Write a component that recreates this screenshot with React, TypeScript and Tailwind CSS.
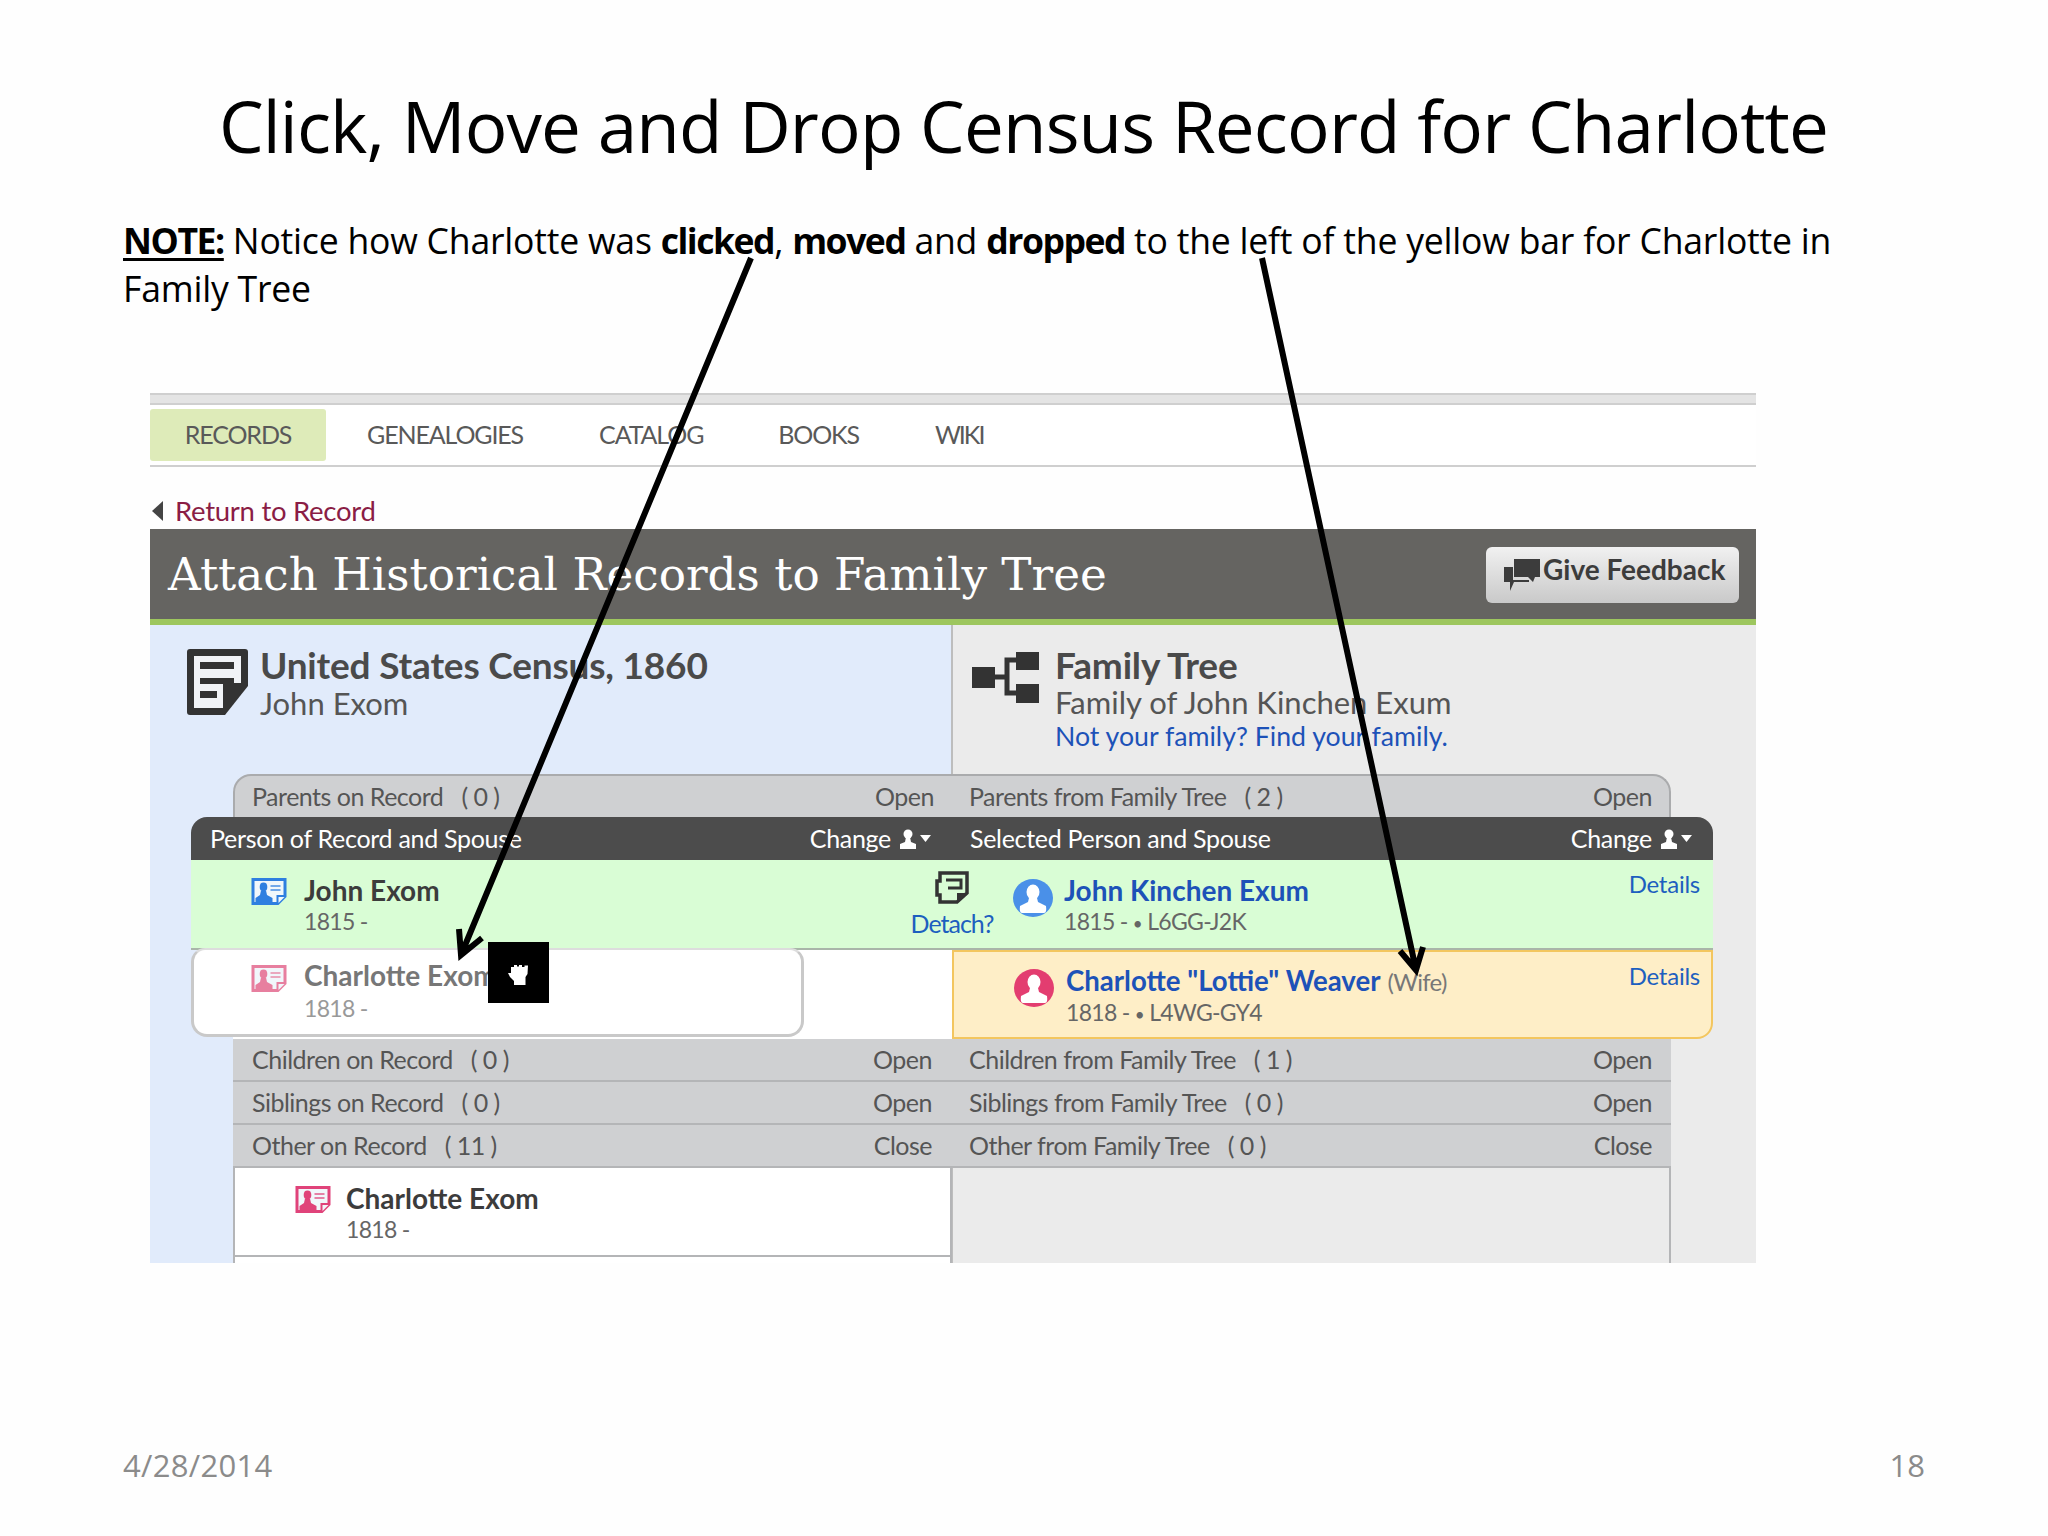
import React from "react";

const ui = "font-['Lato','Liberation_Sans',sans-serif]";

// small card icon next to a record name
const CardIcon = ({ color, className = "" }: { color: string; className?: string }) => (
  <svg viewBox="0 0 35 27" className={`w-[36px] h-[27px] shrink-0 ${className}`}>
    <path d="M0 0H35V19L27 27H0Z" fill={color} />
    <path d="M3 3H32V17H25V24H3Z" fill="#f1f7fb" />
    <path d="M27 19H33L27 25Z" fill="#f1f7fb" />
    <ellipse cx="12" cy="9" rx="3.8" ry="4.4" fill={color} />
    <path d="M9.5 12.5H14.5L15.5 17L21 20V24H4V20L8.5 17Z" fill={color} />
    <path d="M19 8H29M19 12H29" stroke={color} strokeWidth="2" opacity="0.65" />
  </svg>
);

// round person icon on the family tree side
const PersonIcon = ({ color }: { color: string }) => (
  <svg viewBox="0 0 40 38" className="w-[40px] h-[38px] shrink-0">
    <ellipse cx="20" cy="19" rx="20" ry="19" fill={color} />
    <ellipse cx="20" cy="13" rx="6.5" ry="7.5" fill="#fff" />
    <path d="M16 19H24L25 23L33 27Q34 34 31 34H9Q6 34 7 27L15 23Z" fill="#fff" />
  </svg>
);

const SmallPerson = () => (
  <svg viewBox="0 0 33 20" className="w-[33px] h-[20px] shrink-0">
    <circle cx="9" cy="5" r="4.5" fill="#fff" />
    <path d="M7 8H11L12 13L17 15V20H1V15L6 13Z" fill="#fff" />
    <path d="M21 6H32L26.5 13Z" fill="#fff" />
  </svg>
);

const Row = ({
  left,
  leftCount,
  right,
  rightCount,
  action,
  first,
}: {
  left: string;
  leftCount: string;
  right: string;
  rightCount: string;
  action: string;
  first?: boolean;
}) => (
  <div
    className={`ml-[83px] w-[1438px] h-[43px] flex items-center bg-[#cfd0d2] text-[#555] text-[25px] tracking-[-0.02em] ${
      first ? "rounded-t-[18px] border-t-2 border-x-2 border-[#aaabad]" : "border-b-2 border-[#b4b5b7]"
    }`}
  >
    <div className={`w-[719px] ${first ? "pl-[17px]" : "pl-[19px]"} pr-[20px] flex justify-between`}>
      <span>
        {left}
        <span className="ml-[18px] tracking-[-0.02em]">{leftCount}</span>
      </span>
      <span>{action}</span>
    </div>
    <div className={`flex-1 ${first ? "pl-[15px]" : "pl-[17px]"} ${first ? "pr-[17px]" : "pr-[19px]"} flex justify-between`}>
      <span>
        {right}
        <span className="ml-[18px] tracking-[-0.02em]">{rightCount}</span>
      </span>
      <span>{action}</span>
    </div>
  </div>
);

const App = () => {
  return (
    <div className="relative w-[2048px] h-[1536px] bg-[#fefefe] overflow-hidden font-['Open_Sans',sans-serif] text-black">
      <h1 className="absolute left-0 top-[82px] w-[2047px] text-center text-[71px] leading-[88px] tracking-[-0.012em]">
        Click, Move and Drop Census Record for Charlotte
      </h1>

      <div className="pt-[216px] pl-[123px] w-[1880px] text-[35.6px] leading-[48px] tracking-[-0.006em] whitespace-nowrap">
        <span className="font-bold tracking-[-0.04em] underline underline-offset-[4px]">NOTE:</span> Notice how Charlotte was{" "}
        <b className="tracking-[-0.042em]">clicked</b>, <b className="tracking-[-0.042em]">moved</b> and{" "}
        <b className="tracking-[-0.042em]">dropped</b> to the left of the yellow bar for Charlotte in
        <br />
        Family Tree
      </div>

      <div className={`mt-[81px] ml-[150px] w-[1606px] ${ui}`}>
        <div className="h-[12px] bg-[#e4e4e4] border-y-2 border-[#cfcfcf]" />
        <nav className="h-[62px] pt-[4px] border-b-2 border-[#cfcfcf] bg-white flex items-start text-[25px] tracking-[-0.045em] text-[#595959]">
          <span className="w-[176px] h-[52px] flex items-center justify-center rounded-[3px] bg-[#deebb9]">RECORDS</span>
          <span className="ml-[41px] h-[52px] flex items-center">GENEALOGIES</span>
          <span className="ml-[76px] h-[52px] flex items-center">CATALOG</span>
          <span className="ml-[75px] h-[52px] flex items-center">BOOKS</span>
          <span className="ml-[76px] h-[52px] flex items-center tracking-[-0.08em]">WIKI</span>
        </nav>
        <div className="h-[62px] pt-[26px] flex items-center text-[27.5px] text-[#8a1d45] tracking-[-0.01em]">
          <svg viewBox="0 0 11 20" className="ml-[2px] w-[11px] h-[20px] mr-[12px]">
            <path d="M11 0V20L0 10Z" fill="#444" />
          </svg>
          Return to Record
        </div>

        <header className="h-[96px] bg-[#656461] border-b-[6px] border-[#9dc65e] flex items-center justify-between pl-[18px] pr-[17px]">
          <span className="font-['DejaVu_Serif',serif] text-[45.3px] text-white pt-[2px]">
            Attach Historical Records to Family Tree
          </span>
          <button className="mt-[2px] w-[253px] h-[56px] rounded-[6px] bg-gradient-to-b from-[#f1f1f1] to-[#c9c9c9] flex items-start pl-[18px] pt-[4px] text-[28px] leading-[36px] font-bold text-[#3c3c3c] whitespace-nowrap">
            <svg viewBox="0 0 36 33" className="w-[36px] h-[33px] shrink-0 mt-[8px] mr-[3px]">
              <path d="M0 8H9V21H25V23H10L6 32V23H0Z" fill="#3c3c3c" />
              <path d="M10 0H36V18H31L29 23L24 18H10Z" fill="#3c3c3c" />
            </svg>
            Give Feedback
          </button>
        </header>

        <div className="h-[638px] overflow-hidden bg-[linear-gradient(to_right,#e1ebfb_801px,#bdbdbd_801px,#bdbdbd_803px,#ebebeb_803px)]">
          <div className="h-[149px] flex text-[#4a4a4a]">
            <div className="w-[802px] pl-[37px] pt-[24px] flex">
              <svg viewBox="0 0 61 66" className="w-[61px] h-[66px] mr-[12px] shrink-0">
                <path d="M3 0H58Q61 0 61 3V37L38 66H3Q0 66 0 63V3Q0 0 3 0Z" fill="#333" />
                <path d="M7 7H54V34H36V59H7Z" fill="#f1f3f7" />
                <path d="M13 13H47V20H13ZM13 29H47V35H13ZM13 42H30V49H13Z" fill="#333" />
              </svg>
              <div className="-mt-[3px]">
                <div className="text-[37px] leading-[38px] font-bold tracking-[-0.005em]">United States Census, 1860</div>
                <div className="text-[31px] leading-[38px] text-[#555]">John Exom</div>
              </div>
            </div>
            <div className="flex-1 pl-[19px] pt-[24px] flex">
              <svg viewBox="0 0 68 51" className="w-[68px] h-[51px] mt-[3px] mr-[16px] shrink-0">
                <rect x="1" y="15" width="23" height="21" fill="#333" />
                <rect x="45" y="0" width="23" height="18" fill="#333" />
                <rect x="45" y="32" width="23" height="19" fill="#333" />
                <path d="M24 25H36M45 8H36V41H45" fill="none" stroke="#333" strokeWidth="5" />
              </svg>
              <div className="-mt-[3px]">
                <div className="text-[37px] leading-[38px] font-bold tracking-[-0.005em]">Family Tree</div>
                <div className="text-[31px] leading-[37px] text-[#555]">Family of John Kinchen Exum</div>
                <div className="text-[26.7px] leading-[31px] text-[#1d52b8]">Not your family? Find your family.</div>
              </div>
            </div>
          </div>

          <Row first left="Parents on Record" leftCount="( 0 )" right="Parents from Family Tree" rightCount="( 2 )" action="Open" />

          <div className="ml-[41px] w-[1522px] h-[43px] rounded-t-[16px] bg-[#4c4c4c] flex items-center text-[25px] text-white tracking-[-0.012em]">
            <div className="w-[761px] pl-[19px] pr-[20px] flex justify-between items-center">
              <span>Person of Record and Spouse</span>
              <span className="flex items-center gap-[8px]">
                Change <SmallPerson />
              </span>
            </div>
            <div className="flex-1 pl-[18px] pr-[20px] flex justify-between items-center">
              <span>Selected Person and Spouse</span>
              <span className="flex items-center gap-[8px]">
                Change <SmallPerson />
              </span>
            </div>
          </div>

          <div className="ml-[41px] w-[1522px] h-[90px] bg-[#d9fdd5] border-b-2 border-[#a9b5a9] flex">
            <div className="w-[707px] pl-[60px] pt-[14px] flex">
              <CardIcon color="#2f7fe0" className="mt-[4px]" />
              <div className="ml-[17px]">
                <div className="text-[28px] leading-[32px] font-bold text-[#3c3c3c]">John Exom</div>
                <div className="text-[23px] leading-[30px] text-[#666] tracking-[-0.03em]">1815 -</div>
              </div>
            </div>
            <div className="w-[108px] pt-[11px] flex flex-col items-center">
              <svg viewBox="0 0 34 33" className="w-[34px] h-[33px]">
                <path d="M5 2H32V22L22 31H5V24H2V10H5Z" fill="none" stroke="#333" strokeWidth="3.5" />
                <path d="M11 9H26V17H13" fill="none" stroke="#333" strokeWidth="3" />
                <path d="M32 22L22 32V22Z" fill="#333" />
              </svg>
              <div className="mt-[4px] text-[25px] leading-[30px] text-[#1d5fbf] tracking-[-0.04em]">Detach?</div>
            </div>
            <div className="pl-[7px] pt-[19px]">
              <PersonIcon color="#4a90e8" />
            </div>
            <div className="pl-[11px] pt-[14px]">
              <div className="text-[28px] leading-[32px] font-bold text-[#1d52b8]">John Kinchen Exum</div>
              <div className="text-[23px] leading-[31px] text-[#666] tracking-[-0.03em]">
                1815 - <span className="text-[17px]">•</span> L6GG-J2K
              </div>
            </div>
            <div className="ml-auto pr-[13px] pt-[8px] text-[24px] leading-[32px] text-[#1d5fbf] tracking-[-0.01em]">Details</div>
          </div>

          <div className="ml-[41px] w-[1522px] h-[89px] flex">
            <div className="w-[761px] bg-[linear-gradient(to_right,transparent_42px,#fff_42px)]">
              <div className="w-[613px] h-[89px] -mt-[2px] bg-white border-[3px] border-t-2 border-t-[#ddd] border-[#c9c9c9] rounded-b-[16px] rounded-t-[14px] pl-[57px] pt-[9px] flex">
                <CardIcon color="#e77f9f" className="mt-[6px]" />
                <div className="ml-[17px]">
                  <div className="text-[28px] leading-[32px] font-bold text-[#777]">Charlotte Exom</div>
                  <div className="text-[23px] leading-[34px] text-[#999] tracking-[-0.03em]">1818 -</div>
                </div>
              </div>
            </div>
            <div className="flex-1 bg-[#feeec7] border-2 border-[#f3c65f] rounded-br-[16px] flex">
              <div className="pl-[60px] pt-[17px]">
                <PersonIcon color="#e33d70" />
              </div>
              <div className="pl-[12px] pt-[13px]">
                <div className="text-[27.6px] leading-[32px] font-bold text-[#1d52b8]">
                  Charlotte "Lottie" Weaver
                  <span className="ml-[7px] font-normal text-[24px] text-[#777] tracking-[-0.03em]">(Wife)</span>
                </div>
                <div className="text-[23px] leading-[29px] text-[#666] tracking-[-0.03em]">
                  1818 - <span className="text-[17px]">•</span> L4WG-GY4
                </div>
              </div>
              <div className="ml-auto pr-[11px] pt-[8px] text-[24px] leading-[32px] text-[#1d5fbf] tracking-[-0.01em]">Details</div>
            </div>
          </div>

          <Row left="Children on Record" leftCount="( 0 )" right="Children from Family Tree" rightCount="( 1 )" action="Open" />
          <Row left="Siblings on Record" leftCount="( 0 )" right="Siblings from Family Tree" rightCount="( 0 )" action="Open" />
          <Row left="Other on Record" leftCount="( 11 )" right="Other from Family Tree" rightCount="( 0 )" action="Close" />

          <div className="ml-[83px] w-[1438px] h-[100px] flex">
            <div className="w-[719px] border-x-2 border-[#b4b5b7]">
              <div className="h-[89px] bg-white border-b-2 border-[#b4b5b7] pl-[60px] pt-[15px] flex">
                <CardIcon color="#e0437a" className="mt-[3px]" />
                <div className="ml-[15px]">
                  <div className="text-[28px] leading-[30px] font-bold text-[#3c3c3c]">Charlotte Exom</div>
                  <div className="text-[23px] leading-[32px] text-[#666] tracking-[-0.03em]">1818 -</div>
                </div>
              </div>
              <div className="h-[11px] bg-white" />
            </div>
            <div className="flex-1 border-r-2 border-[#b4b5b7]" />
          </div>
        </div>
      </div>

      {/* drag cursor */}
      <div className="absolute left-[488px] top-[942px] w-[61px] h-[61px] bg-black flex items-center justify-center">
        <svg viewBox="0 0 22 20" className="w-[22px] h-[20px] mt-[4px] ml-[1px]">
          <path d="M3 2H6V0H9V1.5H11V0H14V2H16.5V0.5H20L19.5 9L17.5 12V20H6V16L2 12L0 8H3Z" fill="#fff" />
        </svg>
      </div>

      {/* annotation arrows */}
      <svg className="absolute left-0 top-0 pointer-events-none" width="2048" height="1536" viewBox="0 0 2048 1536">
        <path d="M751 258L461 955M459 929L461 955L482 938" fill="none" stroke="#000" strokeWidth="6" />
        <path d="M1262 258L1416 970M1400 951L1416 970L1423 947" fill="none" stroke="#000" strokeWidth="6" />
      </svg>

      <div className="absolute left-[123px] top-[1446px] text-[31px] leading-[38px] text-[#8b8b8b] tracking-[0.01em]">4/28/2014</div>
      <div className="absolute right-[123px] top-[1446px] text-[31px] leading-[38px] text-[#8b8b8b]">18</div>
    </div>
  );
};

export default App;
